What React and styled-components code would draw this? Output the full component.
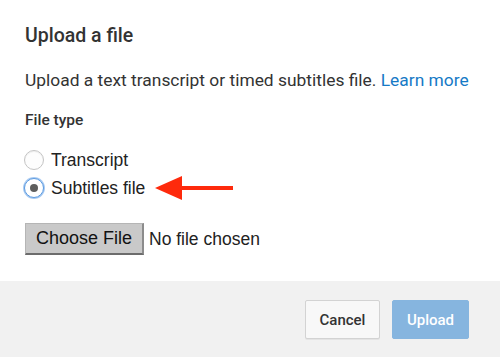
import React from "react";
import styled, { createGlobalStyle } from "styled-components";

const GlobalStyle = createGlobalStyle`
  html, body {
    margin: 0;
    padding: 0;
    background: #fff;
  }
  body {
    font-family: Roboto, "Liberation Sans", Arial, sans-serif;
  }
`;

const Dialog = styled.div`
  width: 500px;
  height: 357px;
  display: flex;
  flex-direction: column;
  background: #fff;
  overflow: hidden;
`;

const Body = styled.div`
  flex: 1;
  padding: 24px 25px 0;
`;

const Title = styled.h2`
  margin: 0;
  font-size: 19.5px;
  line-height: 24px;
  font-weight: 500;
  color: #333;
`;

const Description = styled.p`
  margin: 21px 0 0;
  font-size: 17.4px;
  line-height: 22px;
  color: #333;
  white-space: nowrap;
`;

const Link = styled.a`
  color: #167ac6;
  text-decoration: none;
`;

const Label = styled.div`
  margin-top: 19px;
  font-size: 15.5px;
  line-height: 20px;
  font-weight: 500;
  color: #333;
`;

const RadioGroup = styled.div`
  margin-top: 16px;
  display: flex;
  flex-direction: column;
`;

const Row = styled.label`
  display: flex;
  align-items: center;
  height: 28px;
  font-family: "Liberation Sans", Arial, sans-serif;
  font-size: 17.5px;
  color: #222;
`;

const Radio = styled.span`
  box-sizing: border-box;
  width: 20px;
  height: 20px;
  margin-left: -1px;
  margin-right: 7px;
  border-radius: 50%;
  background: ${p => (p.checked ? "#fff" : "#fdfdfd")};
  border: 1px solid ${p => (p.checked ? "#5b9ae0" : "#c4c4c4")};
  box-shadow: ${p =>
    p.checked ? "0 0 0 1px #a9cbf2" : "inset 0 1px 1px rgba(0,0,0,0.06)"};
  display: flex;
  align-items: center;
  justify-content: center;
  &::after {
    content: "";
    display: ${p => (p.checked ? "block" : "none")};
    width: 8px;
    height: 8px;
    border-radius: 50%;
    background: #5e5e5e;
  }
`;

const Arrow = styled.svg`
  margin-left: 10px;
  margin-top: -1px;
`;

const FileRow = styled.div`
  margin-top: 21px;
  display: flex;
  align-items: center;
  font-family: "Liberation Sans", Arial, sans-serif;
  font-size: 17.5px;
  color: #222;
`;

const ChooseButton = styled.button`
  box-sizing: border-box;
  height: 32px;
  width: 119px;
  padding: 0;
  background: #c9c9c9;
  border: 1px solid #b5b5b5;
  border-right: 2px solid #8c8c8c;
  border-bottom: 2px solid #6c6c6c;
  font-family: "Liberation Sans", Arial, sans-serif;
  font-size: 18px;
  color: #111;
  margin-right: 5px;
`;

const Footer = styled.div`
  height: 76px;
  background: #f1f1f1;
  display: flex;
  justify-content: flex-end;
  align-items: flex-start;
  gap: 12px;
  padding: 19px 31px 0 0;
  box-sizing: border-box;
`;

const Button = styled.button`
  box-sizing: border-box;
  height: 39px;
  width: ${p => p.w}px;
  border-radius: 2px;
  font-family: Roboto, "Liberation Sans", Arial, sans-serif;
  font-size: 15px;
  font-weight: 500;
  border: 1px solid ${p => (p.primary ? "#86b5df" : "#d3d3d3")};
  background: ${p => (p.primary ? "#86b5df" : "#f8f8f8")};
  color: ${p => (p.primary ? "#fff" : "#333")};
  box-shadow: ${p => (p.primary ? "none" : "0 1px 0 rgba(0,0,0,0.05)")};
`;

export default function App() {
  return (
    <Dialog>
      <GlobalStyle />
      <Body>
        <Title>Upload a file</Title>
        <Description>
          Upload a text transcript or timed subtitles file.{" "}
          <Link href="#">Learn more</Link>
        </Description>
        <Label>File type</Label>
        <RadioGroup>
          <Row>
            <Radio />
            Transcript
          </Row>
          <Row>
            <Radio checked />
            Subtitles file
            <Arrow width="80" height="26" viewBox="0 0 80 26">
              <polygon points="0,13 27,1 27,25" fill="#fe2a0c" />
              <rect x="26" y="11" width="52" height="4" fill="#fe2a0c" />
            </Arrow>
          </Row>
        </RadioGroup>
        <FileRow>
          <ChooseButton>Choose File</ChooseButton>
          No file chosen
        </FileRow>
      </Body>
      <Footer>
        <Button w={75}>Cancel</Button>
        <Button w={77} primary>
          Upload
        </Button>
      </Footer>
    </Dialog>
  );
}
